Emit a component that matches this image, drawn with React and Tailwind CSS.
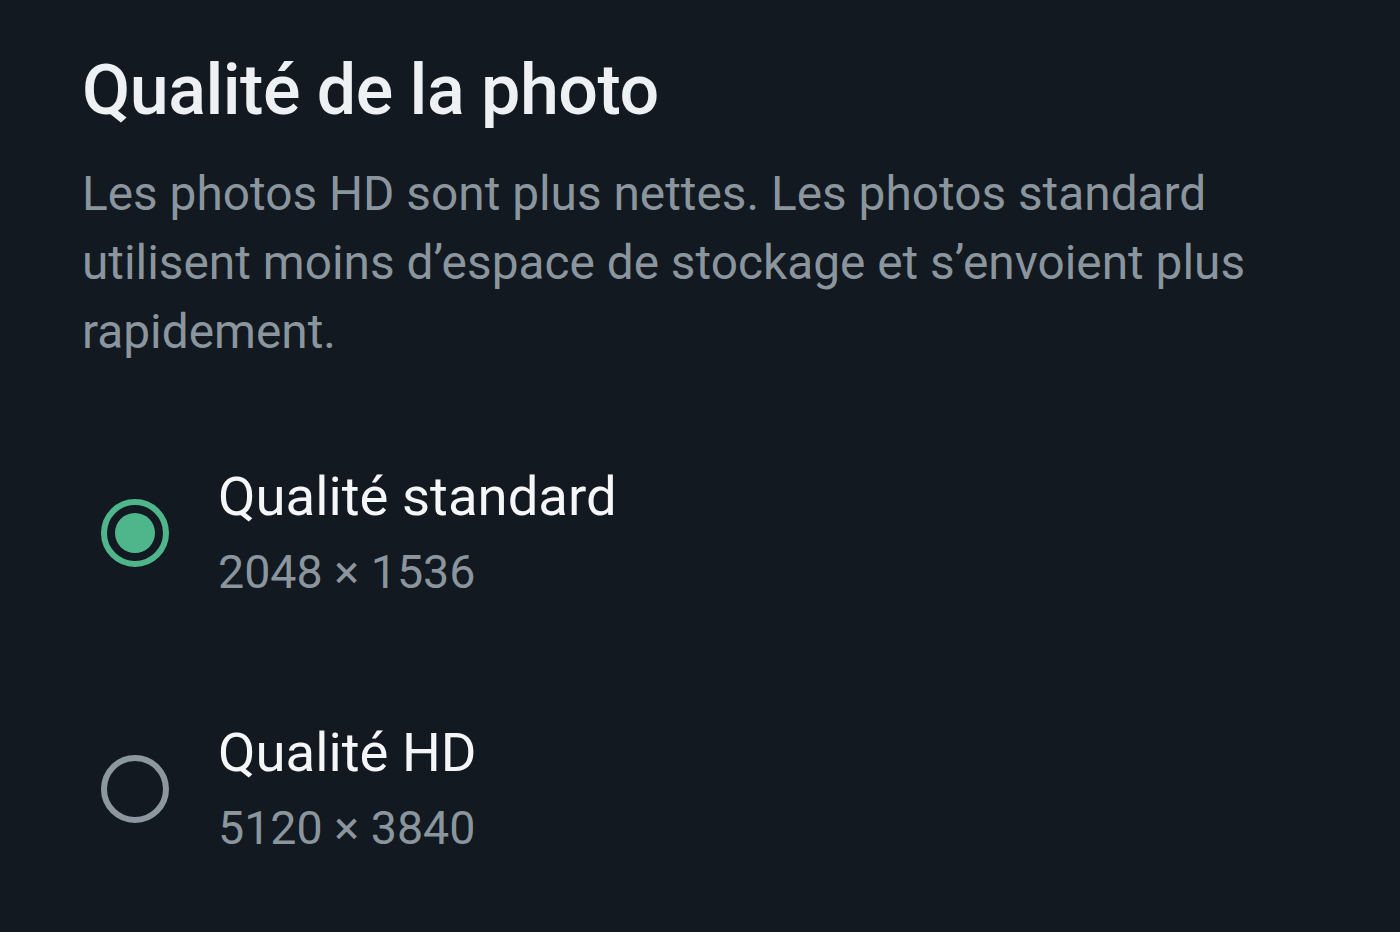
import React, { useState } from "react";

const options = [
  { id: "standard", label: "Qualité standard", size: "2048 × 1536" },
  { id: "hd", label: "Qualité HD", size: "5120 × 3840" },
];

function Radio({ checked }) {
  return (
    <div
      className={`w-[68px] h-[68px] rounded-full border-[6px] flex items-center justify-center shrink-0 ${
        checked ? "border-[#4fb68c]" : "border-[#8d979f]"
      }`}
    >
      {checked && <div className="w-[40px] h-[40px] rounded-full bg-[#4fb68c]" />}
    </div>
  );
}

export default function App() {
  const [selected, setSelected] = useState("standard");

  return (
    <div
      className="w-[1400px] h-[932px] bg-[#121920] overflow-hidden px-[82px] pt-[50px]"
      style={{ fontFamily: "Roboto, 'Noto Sans', sans-serif" }}
    >
      <h1 className="text-[70px] leading-[80px] font-medium text-[#eef1f3] tracking-[-0.5px]">
        Qualité de la photo
      </h1>
      <p className="mt-[30px] text-[47.8px] leading-[69px] text-[#8b959e] max-w-[1220px]">
        Les photos HD sont plus nettes. Les photos standard utilisent moins d’espace de stockage et s’envoient plus rapidement.
      </p>

      <div className="mt-[89px] flex flex-col gap-[102px]">
        {options.map((o) => (
          <div
            key={o.id}
            className="flex items-center cursor-pointer"
            onClick={() => setSelected(o.id)}
          >
            <div className="w-[136px] pl-[19px]">
              <Radio checked={selected === o.id} />
            </div>
            <div className="flex flex-col pt-[2px]">
              <span className="text-[54.5px] leading-[76px] text-[#f4f6f7]">{o.label}</span>
              <span className="text-[46.6px] leading-[76px] text-[#8b959e]">{o.size}</span>
            </div>
          </div>
        ))}
      </div>
    </div>
  );
}
